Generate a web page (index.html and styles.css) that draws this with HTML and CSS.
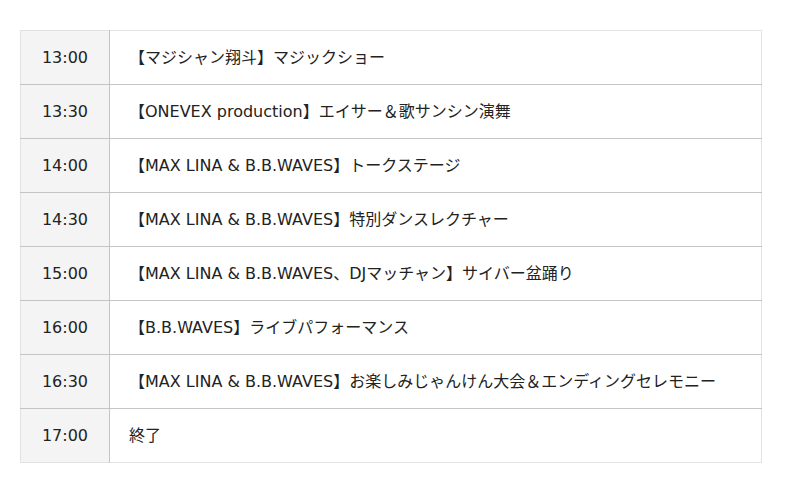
FILE: index.html
```html
<!DOCTYPE html>
<html lang="ja">
<head>
<meta charset="utf-8">
<link rel="stylesheet" href="styles.css">
</head>
<body>
<div class="wrap">
<table class="schedule">
<tbody>
<tr><th>13:00</th><td>【マジシャン翔斗】マジックショー</td></tr>
<tr><th>13:30</th><td>【ONEVEX production】エイサー＆歌サンシン演舞</td></tr>
<tr><th>14:00</th><td>【MAX LINA &amp; B.B.WAVES】トークステージ</td></tr>
<tr><th>14:30</th><td>【MAX LINA &amp; B.B.WAVES】特別ダンスレクチャー</td></tr>
<tr><th>15:00</th><td>【MAX LINA &amp; B.B.WAVES、DJマッチャン】サイバー盆踊り</td></tr>
<tr><th>16:00</th><td>【B.B.WAVES】ライブパフォーマンス</td></tr>
<tr><th>16:30</th><td>【MAX LINA &amp; B.B.WAVES】お楽しみじゃんけん大会＆エンディングセレモニー</td></tr>
<tr><th>17:00</th><td>終了</td></tr>
</tbody>
</table>
</div>
</body>
</html>
```
FILE: styles.css
```css
html, body {
  margin: 0;
  padding: 0;
  background: #fff;
}
.wrap {
  padding: 30px 38px 0 20px;
}
.schedule {
  width: 742px;
  border-collapse: collapse;
  font-family: "DejaVu Sans", "Noto Sans CJK JP", sans-serif;
  font-size: 16px;
  line-height: 20px;
  color: #222;
  border-top: 1px solid #e2e2e2;
  border-left: 1px solid #e2e2e2;
  border-right: 1px solid #e2e2e2;
}
.schedule tr {
  height: 54px;
  border-bottom: 1px solid #c4c4c4;
}
.schedule tr:last-child {
  border-bottom: 1px solid #e2e2e2;
}
.schedule th {
  width: 88px;
  padding: 0;
  background: #f4f4f4;
  font-weight: normal;
  text-align: center;
  vertical-align: middle;
  border-right: 1px solid #c4c4c4;
}
.schedule td {
  padding: 0 0 0 19px;
  text-align: left;
  vertical-align: middle;
}
```
